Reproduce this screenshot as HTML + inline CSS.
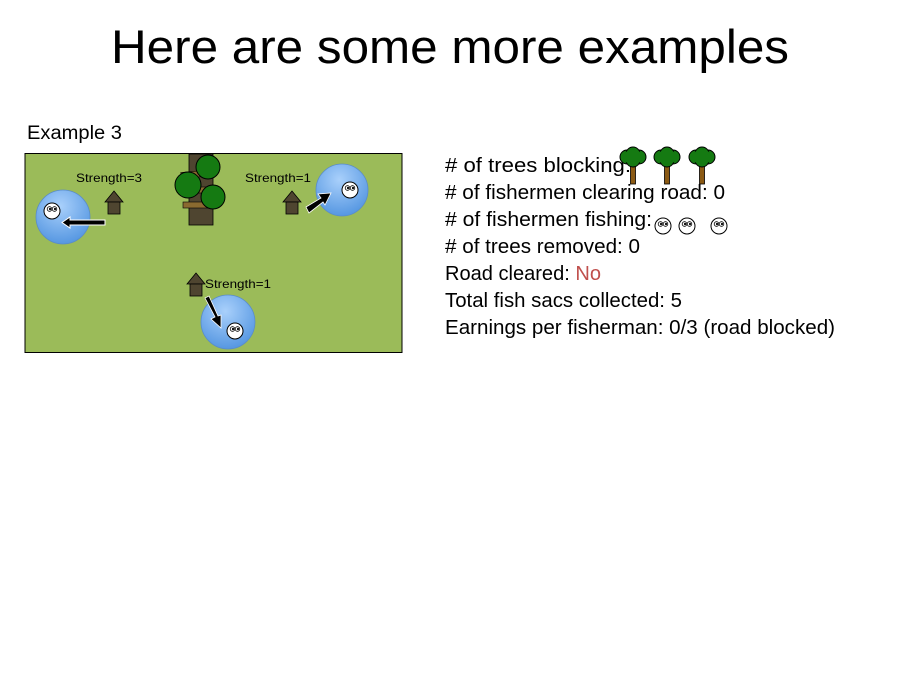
<!DOCTYPE html>
<html><head><style>html,body{margin:0;padding:0;background:#fff;}svg{display:block}</style></head>
<body>
<svg width="900" height="675" viewBox="0 0 900 675" xmlns="http://www.w3.org/2000/svg" font-family="'Liberation Sans', sans-serif">
<defs>
<radialGradient id="bl" cx="0.45" cy="0.3" r="0.8">
<stop offset="0" stop-color="#a9d0fb"/><stop offset="1" stop-color="#4a8fde"/>
</radialGradient>
<g id="face">
<circle r="8" fill="#fff" stroke="#000" stroke-width="1"/>
<circle cx="-2.5" cy="-2" r="2.3" fill="#fff" stroke="#000" stroke-width="0.8"/>
<circle cx="2.5" cy="-2" r="2.3" fill="#fff" stroke="#000" stroke-width="0.8"/>
<circle cx="-2" cy="-2" r="1.1" fill="#000"/><circle cx="3" cy="-2" r="1.1" fill="#000"/>
</g>
<g id="house">
<polygon points="-9,0 0,-11 9,0" fill="#4f4530" stroke="#000" stroke-width="0.8"/>
<rect x="-6" y="0" width="12" height="12" fill="#4f4530" stroke="#000" stroke-width="0.8"/>
</g>
<g id="tree">
<rect x="-2.5" y="4" width="5" height="22" fill="#8b5a14" stroke="#000" stroke-width="0.8"/>
<circle cx="-6" cy="-1" r="7" fill="#157a12" stroke="#000" stroke-width="1"/>
<circle cx="6" cy="-1" r="7" fill="#157a12" stroke="#000" stroke-width="1"/>
<circle cx="0" cy="-4" r="7" fill="#157a12" stroke="#000" stroke-width="1"/>
<circle cx="0" cy="2" r="7" fill="#157a12" stroke="#000" stroke-width="1"/>
<ellipse cx="0" cy="-1" rx="10" ry="7" fill="#157a12"/>
</g>
</defs>
<text x="450" y="63" font-size="47" text-anchor="middle" textLength="678" lengthAdjust="spacingAndGlyphs">Here are some more examples</text>
<text x="27" y="139" font-size="19" textLength="95" lengthAdjust="spacingAndGlyphs">Example 3</text>

<rect x="25" y="153.5" width="377" height="199" fill="#9bbb59" stroke="#000" stroke-width="1"/>
<rect x="189" y="154" width="24" height="71" fill="#4f4530" stroke="#000" stroke-width="0.8"/>
<rect x="181" y="171" width="34" height="6" fill="#8a6a30" stroke="#000" stroke-width="0.6" transform="rotate(-5 198 174)"/>
<rect x="186" y="187" width="34" height="6" fill="#8a6a30" stroke="#000" stroke-width="0.6"/>
<rect x="183" y="202" width="34" height="6" fill="#8a6a30" stroke="#000" stroke-width="0.6"/>
<circle cx="208" cy="167" r="12" fill="#157a12" stroke="#000"/>
<circle cx="188" cy="185" r="13" fill="#157a12" stroke="#000"/>
<circle cx="213" cy="197" r="12" fill="#157a12" stroke="#000"/>

<text x="76" y="182" font-size="12" textLength="66" lengthAdjust="spacingAndGlyphs">Strength=3</text>
<text x="245" y="182" font-size="12" textLength="66" lengthAdjust="spacingAndGlyphs">Strength=1</text>
<text x="205" y="288" font-size="12" textLength="66" lengthAdjust="spacingAndGlyphs">Strength=1</text>
<use href="#house" x="114" y="202"/>
<use href="#house" x="292" y="202"/>
<use href="#house" x="196" y="284"/>

<circle cx="63" cy="217" r="27" fill="url(#bl)" stroke="#5a8cc8" stroke-width="0.8"/>
<circle cx="342" cy="190" r="26" fill="url(#bl)" stroke="#5a8cc8" stroke-width="0.8"/>
<circle cx="228" cy="322" r="27" fill="url(#bl)" stroke="#5a8cc8" stroke-width="0.8"/>
<use href="#face" x="52" y="211"/>
<use href="#face" x="350" y="190"/>
<use href="#face" x="235" y="331"/>
<polygon points="105,220 70,220 70,217 62,222.5 70,228 70,225 105,225" fill="#000" stroke="#fff" stroke-width="1"/>
<polygon points="306,207 321,198 318,194 331,193 325,205 323,202 309,213" fill="#000" stroke="#fff" stroke-width="0.8"/>
<polygon points="205,298 215,317 211,319 221,328 221,315 218,316 209,296" fill="#000" stroke="#fff" stroke-width="0.8"/>

<g font-size="20">
<text x="445" y="172" textLength="186" lengthAdjust="spacingAndGlyphs"># of trees blocking:</text>
<text x="445" y="199" textLength="280" lengthAdjust="spacingAndGlyphs"># of fishermen clearing road: 0</text>
<text x="445" y="226" textLength="207" lengthAdjust="spacingAndGlyphs"># of fishermen fishing:</text>
<text x="445" y="253" textLength="195" lengthAdjust="spacingAndGlyphs"># of trees removed: 0</text>
<text x="445" y="280" textLength="156" lengthAdjust="spacingAndGlyphs">Road cleared: <tspan fill="#c0504d">No</tspan></text>
<text x="445" y="307" textLength="237" lengthAdjust="spacingAndGlyphs">Total fish sacs collected: 5</text>
<text x="445" y="334" textLength="390" lengthAdjust="spacingAndGlyphs">Earnings per fisherman: 0/3 (road blocked)</text>
</g>
<use href="#tree" x="633" y="158"/>
<use href="#tree" x="667" y="158"/>
<use href="#tree" x="702" y="158"/>
<use href="#face" x="663" y="226"/>
<use href="#face" x="687" y="226"/>
<use href="#face" x="719" y="226"/>
</svg>
</body></html>
